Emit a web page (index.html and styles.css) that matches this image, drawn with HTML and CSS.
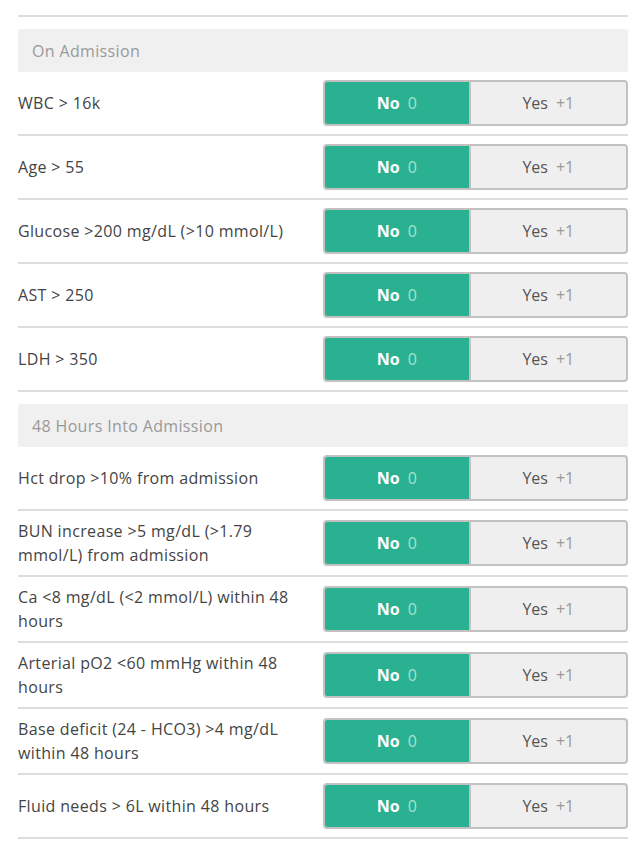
FILE: index.html
```html
<!DOCTYPE html>
<html>
<head>
<meta charset="utf-8">
<link rel="stylesheet" href="styles.css">
</head>
<body>
<div class="calc">
  <section class="section">
    <div class="section-title">On Admission</div>
    <div class="row"><div class="label">WBC &gt; 16k</div><div class="toggle"><div class="opt on"><b>No</b><span class="pts">0</span></div><div class="opt"><span>Yes</span><span class="pts">+1</span></div></div></div>
    <div class="row"><div class="label">Age &gt; 55</div><div class="toggle"><div class="opt on"><b>No</b><span class="pts">0</span></div><div class="opt"><span>Yes</span><span class="pts">+1</span></div></div></div>
    <div class="row"><div class="label">Glucose &gt;200 mg/dL (&gt;10 mmol/L)</div><div class="toggle"><div class="opt on"><b>No</b><span class="pts">0</span></div><div class="opt"><span>Yes</span><span class="pts">+1</span></div></div></div>
    <div class="row"><div class="label">AST &gt; 250</div><div class="toggle"><div class="opt on"><b>No</b><span class="pts">0</span></div><div class="opt"><span>Yes</span><span class="pts">+1</span></div></div></div>
    <div class="row"><div class="label">LDH &gt; 350</div><div class="toggle"><div class="opt on"><b>No</b><span class="pts">0</span></div><div class="opt"><span>Yes</span><span class="pts">+1</span></div></div></div>
  </section>
  <section class="section">
    <div class="section-title">48 Hours Into Admission</div>
    <div class="row"><div class="label">Hct drop &gt;10% from admission</div><div class="toggle"><div class="opt on"><b>No</b><span class="pts">0</span></div><div class="opt"><span>Yes</span><span class="pts">+1</span></div></div></div>
    <div class="row"><div class="label">BUN increase &gt;5 mg/dL (&gt;1.79 mmol/L) from admission</div><div class="toggle"><div class="opt on"><b>No</b><span class="pts">0</span></div><div class="opt"><span>Yes</span><span class="pts">+1</span></div></div></div>
    <div class="row"><div class="label">Ca &lt;8 mg/dL (&lt;2 mmol/L) within 48 hours</div><div class="toggle"><div class="opt on"><b>No</b><span class="pts">0</span></div><div class="opt"><span>Yes</span><span class="pts">+1</span></div></div></div>
    <div class="row"><div class="label">Arterial pO2 &lt;60 mmHg within 48 hours</div><div class="toggle"><div class="opt on"><b>No</b><span class="pts">0</span></div><div class="opt"><span>Yes</span><span class="pts">+1</span></div></div></div>
    <div class="row"><div class="label">Base deficit (24 - HCO3) &gt;4 mg/dL within 48 hours</div><div class="toggle"><div class="opt on"><b>No</b><span class="pts">0</span></div><div class="opt"><span>Yes</span><span class="pts">+1</span></div></div></div>
    <div class="row"><div class="label">Fluid needs &gt; 6L within 48 hours</div><div class="toggle"><div class="opt on"><b>No</b><span class="pts">0</span></div><div class="opt"><span>Yes</span><span class="pts">+1</span></div></div></div>
  </section>
</div>
</body>
</html>
```
FILE: styles.css
```css
html, body {
  margin: 0;
  padding: 0;
  background: #fff;
}
body {
  font-family: "Open Sans", "Liberation Sans", sans-serif;
  font-size: 16px;
  color: #444;
}
.calc {
  padding: 15px 12px 0 18px;
}
.calc > .section:first-child {
  border-top: 2px solid #dddddd;
}
.section {
  padding-top: 12px;
}
.section-title {
  background: #f0f0f0;
  color: #999;
  height: 43px;
  line-height: 45px;
  padding-left: 14px;
  border-radius: 2px;
  letter-spacing: 0.35px;
}
.row {
  display: flex;
  align-items: center;
  padding: 8px 0;
  border-bottom: 2px solid #dddddd;
}
.label {
  flex: 0 0 50%;
  box-sizing: border-box;
  padding-right: 12px;
  line-height: 24px;
  min-height: 46px;
  display: flex;
  align-items: center;
  letter-spacing: 0.35px;
}
.toggle {
  flex: 0 0 50%;
  box-sizing: border-box;
  display: flex;
  height: 46px;
  border: 2px solid #c2c2c2;
  border-radius: 4px;
  overflow: hidden;
  background: #efefef;
}
.opt {
  flex: 1 1 auto;
  display: flex;
  align-items: center;
  justify-content: center;
  gap: 8px;
  color: #555;
}
.opt + .opt {
  border-left: 2px solid #c2c2c2;
}
.opt .pts {
  color: #999;
}
.opt.on {
  background: #29b191;
  color: #fff;
}
.opt.on b {
  font-weight: 700;
}
.opt.on .pts {
  color: #a6e2d2;
}
```
